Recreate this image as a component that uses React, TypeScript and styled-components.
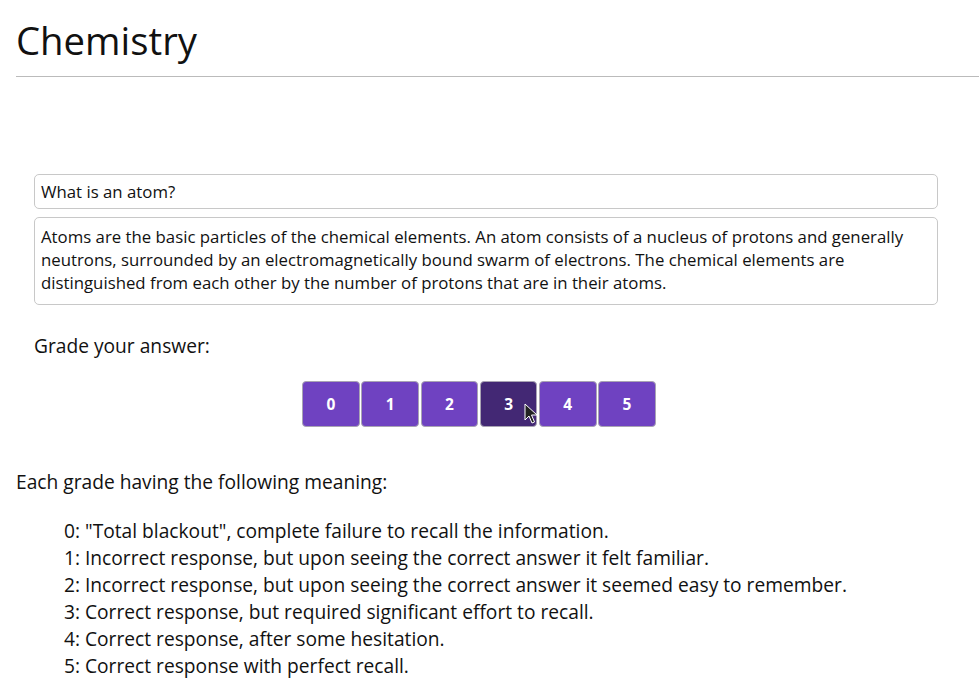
import styled, { createGlobalStyle } from "styled-components";

const GlobalStyle = createGlobalStyle`
  body {
    margin: 0;
    font-family: "Open Sans", "Noto Sans", sans-serif;
    color: #111;
    background: #fff;
  }
`;

const Page = styled.div`
  padding: 0 0 0 16px;
`;

const Title = styled.h1`
  margin: 0;
  padding: 14px 0 10px;
  font-size: 38.3px;
  font-weight: 400;
  line-height: 52px;
  border-bottom: 1px solid #bbb;
`;

const Card = styled.section`
  margin: 97px 41px 0 18px;
  display: flex;
  flex-direction: column;
  gap: 8px;
`;

const Box = styled.div<{ $long?: boolean }>`
  border: 1px solid #c8c8c8;
  border-radius: 5px;
  padding: ${({ $long }) => ($long ? "7px 6px 10px" : "5px 6px")};
  font-size: 16.8px;
  line-height: 23px;
`;

const Label = styled.p`
  margin: 27px 0 0 18px;
  font-size: 19.2px;
  line-height: 27px;
`;

const Grades = styled.div`
  display: flex;
  justify-content: center;
  gap: 1.6px;
  margin: 22px 0 0 -37px;
`;

const GradeButton = styled.button<{ $active?: boolean }>`
  position: relative;
  width: 57.6px;
  height: 46px;
  border: 1px solid #a9a4b3;
  border-radius: 4px;
  background: ${({ $active }) => ($active ? "#432874" : "#6f42c1")};
  color: #fff;
  font-family: "Open Sans", sans-serif;
  font-weight: 700;
  font-size: 15.5px;
  cursor: pointer;
`;

const Pointer = styled.svg`
  position: absolute;
  left: 43px;
  top: 21px;
`;

const Meaning = styled.p`
  margin: 41px 0 0;
  font-size: 19.2px;
  line-height: 27px;
`;

const List = styled.ul`
  list-style: none;
  margin: 22px 0 0;
  padding: 0 0 0 48px;
  font-size: 19.2px;
  line-height: 27px;
`;

const meanings = [
  '0: "Total blackout", complete failure to recall the information.',
  "1: Incorrect response, but upon seeing the correct answer it felt familiar.",
  "2: Incorrect response, but upon seeing the correct answer it seemed easy to remember.",
  "3: Correct response, but required significant effort to recall.",
  "4: Correct response, after some hesitation.",
  "5: Correct response with perfect recall.",
];

export default function App() {
  return (
    <Page>
      <GlobalStyle />
      <Title>Chemistry</Title>
      <Card>
        <Box>What is an atom?</Box>
        <Box $long>
          Atoms are the basic particles of the chemical elements. An atom
          consists of a nucleus of protons and generally neutrons, surrounded
          by an electromagnetically bound swarm of electrons. The chemical
          elements are distinguished from each other by the number of protons
          that are in their atoms.
        </Box>
      </Card>
      <Label>Grade your answer:</Label>
      <Grades>
        {[0, 1, 2, 3, 4, 5].map((g) => (
          <GradeButton key={g} $active={g === 3}>
            {g}
            {g === 3 && (
              <Pointer width="14" height="22" viewBox="0 0 14 22">
                <path
                  d="M1 1 L1 17 L5 13 L8 20 L10.5 19 L7.5 12 L13 12 Z"
                  fill="#222"
                  stroke="#fff"
                  strokeWidth="1"
                  strokeLinejoin="round"
                />
              </Pointer>
            )}
          </GradeButton>
        ))}
      </Grades>
      <Meaning>Each grade having the following meaning:</Meaning>
      <List>
        {meanings.map((m) => (
          <li key={m}>{m}</li>
        ))}
      </List>
    </Page>
  );
}
